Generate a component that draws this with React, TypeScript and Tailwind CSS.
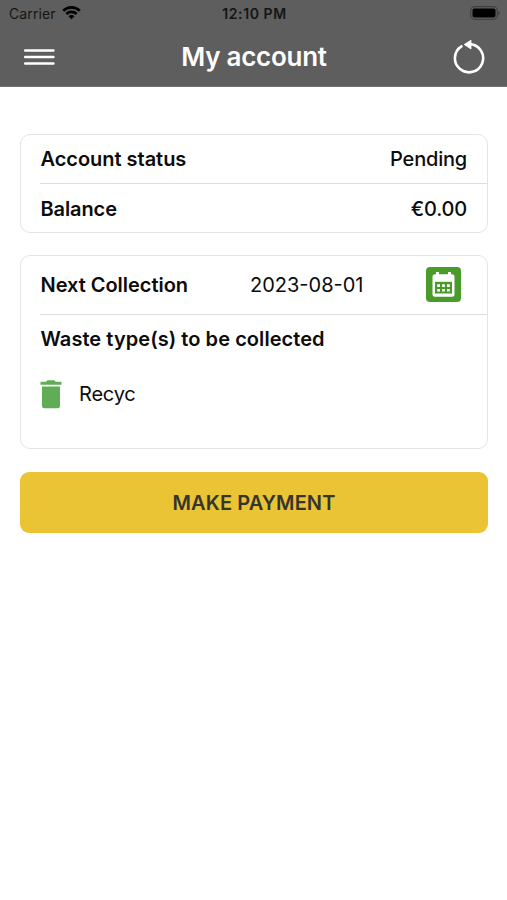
import React from 'react';

export default function App() {
  return (
    <div className="min-h-[900px] bg-white font-['Inter',sans-serif] text-[#0c0c0c]">
      <header className="h-[87px] bg-[#5e5e5e] border-b border-[#707070]">
        <StatusBar />
        <div className="grid grid-cols-3 items-center h-[62px] px-[22px]">
          <MenuIcon className="w-[34px] h-[34px]" />
          <h1 className="pl-[1px] text-center text-[26px] leading-8 font-semibold tracking-[-0.25px] text-white whitespace-nowrap">My account</h1>
          <RefreshIcon className="w-[34px] h-[36px] justify-self-end" />
        </div>
      </header>

      <main className="px-5 pt-[47px] text-[20px] leading-6">
        <section className="w-[468px] h-[99px] border border-[#e4e4e4] rounded-[10px] pl-[19px]">
          <div className="h-[49px] flex items-center justify-between pr-[20px] border-b border-[#dedede]">
            <span className="pl-[0.5px] font-semibold tracking-[-0.03px]">Account status</span>
            <span className="font-medium tracking-[-0.2px]">Pending</span>
          </div>
          <div className="h-[49px] flex items-center justify-between pr-[20px]">
            <span className="pl-[0.5px] font-semibold tracking-[-0.1px]">Balance</span>
            <span className="font-medium tracking-[-0.2px]">€0.00</span>
          </div>
        </section>

        <section className="w-[468px] h-[194px] mt-[22px] border border-[#e4e4e4] rounded-[10px] pl-[19px]">
          <div className="h-[59px] flex items-center border-b border-[#dedede]">
            <span className="w-[210px] pl-[0.5px] font-semibold tracking-[-0.03px]">Next Collection</span>
            <span className="w-[176px]">2023-08-01</span>
            <CalendarIcon className="w-[35px] h-[35px] mb-[1px]" />
          </div>
          <div className="h-[48px] pl-[0.5px] flex items-center font-semibold tracking-[0.06px]">Waste type(s) to be collected</div>
          <div className="h-[62px] flex items-center gap-[17px]">
            <BinIcon className="w-[22px] h-[29px]" />
            <span className="tracking-[-0.2px]">Recyc</span>
          </div>
        </section>

        <button className="w-[468px] h-[61px] mt-[23px] rounded-[9px] bg-[#eac435] text-[#35352d] font-semibold tracking-[0.1px]">
          MAKE PAYMENT
        </button>
      </main>
    </div>
  );
}

function StatusBar() {
  return (
    <div className="grid grid-cols-3 items-center h-[26px] pl-[9px] pr-[7px] text-[14px] text-[#151515]">
      <div className="flex items-center gap-[6px]">
        <span className="tracking-[0.1px]">Carrier</span>
        <WifiIcon className="w-[19px] h-[15px] mb-[1px]" />
      </div>
      <span className="text-center font-semibold tracking-[0.6px]">12:10 PM</span>
      <BatteryIcon className="w-[30px] h-[15px] justify-self-end" />
    </div>
  );
}

function WifiIcon(props: React.SVGProps<SVGSVGElement>) {
  return (
    <svg {...props} viewBox="0 0 19 15" fill="none" stroke="#000" strokeWidth="2.7">
      <path d="M1.2 5.8C5.8 1.2 13.2 1.2 17.8 5.8" />
      <path d="M4.4 9C7.2 6.2 11.8 6.2 14.6 9" />
      <path d="M9.5 14.3 6.5 11.3C8.2 9.7 10.8 9.7 12.5 11.3Z" fill="#000" stroke="none" />
    </svg>
  );
}

function BatteryIcon(props: React.SVGProps<SVGSVGElement>) {
  return (
    <svg {...props} viewBox="0 0 30 15">
      <rect x="0.7" y="0.7" width="26.6" height="12.6" rx="4" fill="none" stroke="#414141" strokeWidth="1.2" />
      <rect x="2.5" y="2.5" width="23" height="9" rx="2" fill="#000" />
      <path d="M28.3 5v4c1-.3 1.5-1.1 1.5-2s-.5-1.7-1.5-2z" fill="#414141" />
    </svg>
  );
}

function MenuIcon(props: React.SVGProps<SVGSVGElement>) {
  return (
    <svg {...props} viewBox="0 0 34 34" fill="none" stroke="#fff" strokeWidth="2.5" strokeLinecap="round">
      <path d="M3.2 10.6h28.2M3.2 17h28.2M3.2 23.4h28.2" />
    </svg>
  );
}

function RefreshIcon(props: React.SVGProps<SVGSVGElement>) {
  return (
    <svg {...props} viewBox="0 0 34 36" fill="none">
      <path d="M19 5.1A14.1 14.1 0 1 1 10.4 7.3" stroke="#fff" strokeWidth="2.6" strokeLinecap="round" />
      <path d="M13.2 5.5 20 1.2v8.800z" fill="#fff" stroke="#fff" strokeWidth="0.8" strokeLinejoin="round" />
    </svg>
  );
}

function CalendarIcon(props: React.SVGProps<SVGSVGElement>) {
  return (
    <svg {...props} viewBox="0 0 35 35">
      <rect width="35" height="35" rx="4" fill="#4a9c2a" />
      <rect x="6.5" y="7.3" width="22" height="22.5" rx="2.5" fill="#fff" />
      <path d="M10 5h3v4h-3zM22 5h3v4h-3z" fill="#fff" />
      <path d="M9 14.8h17v11.7h-17z" fill="#4a9c2a" />
      <path d="M11.2 17.3h2.8v2.6h-2.8zM16.1 17.3h2.8v2.6h-2.8zM21 17.3h2.8v2.6h-2.8zM11.2 22h2.8v2.6h-2.8zM16.1 22h2.8v2.6h-2.8zM21 22h2.8v2.6h-2.8z" fill="#fff" />
    </svg>
  );
}

function BinIcon(props: React.SVGProps<SVGSVGElement>) {
  return (
    <svg {...props} viewBox="0 0 22 29" fill="#60ad55">
      <path d="M.5 1.7H6L7.5.3h6.8l1.5 1.4h5.7v3H.5z" />
      <path d="M2 6.5h18v19.2a2.5 2.5 0 0 1-2.5 2.5h-13A2.5 2.5 0 0 1 2 25.7z" />
    </svg>
  );
}
